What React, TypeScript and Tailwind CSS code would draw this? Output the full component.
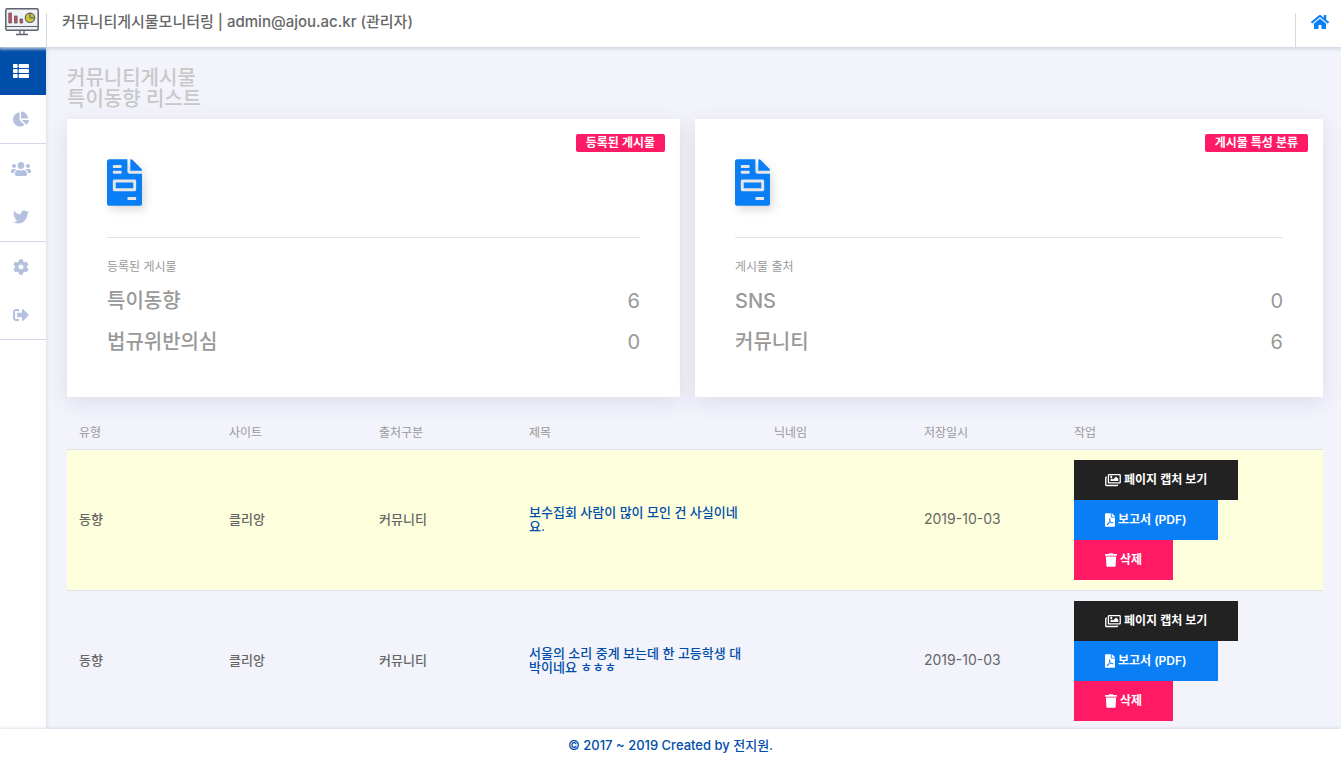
import type { ReactNode } from "react";
import {
  FaThList,
  FaChartPie,
  FaUsers,
  FaTwitter,
  FaCog,
  FaHome,
  FaFilePdf,
  FaRegImages,
  FaSignOutAlt,
  FaTrash,
} from "react-icons/fa";

const menu: { label: string; icon: ReactNode; line?: boolean; active?: boolean }[] = [
  { label: "리스트", icon: <FaThList className="h-4 w-4" />, active: true },
  { label: "통계", icon: <FaChartPie className="h-4 w-4" />, line: true },
  { label: "사용자", icon: <FaUsers className="h-4 w-5" /> },
  { label: "트위터", icon: <FaTwitter className="h-4 w-4" />, line: true },
  { label: "설정", icon: <FaCog className="h-4 w-4" /> },
  { label: "로그아웃", icon: <FaSignOutAlt className="h-4 w-4" />, line: true },
];

const posts = [
  {
    type: "동향",
    site: "클리앙",
    source: "커뮤니티",
    title: "보수집회 사람이 많이 모인 건 사실이네요.",
    nick: "",
    date: "2019-10-03",
    highlight: true,
  },
  {
    type: "동향",
    site: "클리앙",
    source: "커뮤니티",
    title: "서울의 소리 중계 보는데 한 고등학생 대박이네요 ㅎㅎㅎ",
    nick: "",
    date: "2019-10-03",
    highlight: false,
  },
];

function Logo() {
  return (
    <svg viewBox="0 0 36 30" className="h-[30px] w-9" fill="none" aria-hidden="true">
      <rect x="1.8" y="1.8" width="32.4" height="21.4" rx="1.5" fill="#f0f1f4" stroke="#5d636e" strokeWidth="1.5" />
      <path d="M1.8 19.500h32.400" stroke="#5d636e" strokeWidth="1.1" />
      <path d="M16 23.500v3.500M20 23.500v3.500M12 27.500h12" stroke="#5d636e" strokeWidth="1.300" />
      <path d="M4.800 6h2.600v10H4.800zM10.500 9h2.600v7h-2.600zM16 12h2.600v4H16z" fill="#e0464f" stroke="#5d636e" strokeWidth="0.9" />
      <circle cx="26" cy="10.800" r="4.700" fill="#cfc92e" stroke="#5d636e" strokeWidth="1.200" />
      <path d="M26 6v4.800h4.700" stroke="#5d636e" strokeWidth="1.200" />
    </svg>
  );
}

function InvoiceIcon() {
  return (
    <svg viewBox="0 0 384 512" className="h-[47px] w-[35px] drop-shadow-[3px_4px_4px_rgba(0,0,0,0.14)]" aria-hidden="true">
      <path fill="#e6e6e6" d="M40 50h200v90h110v330H40z" />
      <path
        fill="#0a7ff5"
        d="M288 256H96v64h192v-64zm89-151L279.100 7c-4.500-4.500-10.600-7-17-7H256v128h128v-6.100c0-6.300-2.500-12.400-7-16.900zm-153 31V0H24C10.700 0 0 10.700 0 24v464c0 13.300 10.700 24 24 24h336c13.300 0 24-10.700 24-24V160H248c-13.200 0-24-10.800-24-24zM64 72c0-4.420 3.580-8 8-8h80c4.420 0 8 3.580 8 8v16c0 4.420-3.580 8-8 8H72c-4.420 0-8-3.580-8-8V72zm0 64c0-4.420 3.580-8 8-8h80c4.420 0 8 3.580 8 8v16c0 4.420-3.580 8-8 8H72c-4.420 0-8-3.580-8-8v-16zm256 304c0 4.420-3.580 8-8 8h-80c-4.420 0-8-3.580-8-8v-16c0-4.420 3.580-8 8-8h80c4.420 0 8 3.580 8 8v16zm0-200v96c0 8.840-7.160 16-16 16H80c-8.840 0-16-7.160-16-16v-96c0-8.840 7.160-16 16-16h224c8.840 0 16 7.160 16 16z"
      />
    </svg>
  );
}

function Card({ badge, caption, rows }: { badge: string; caption: string; rows: [string, number][] }) {
  return (
    <section className="relative bg-white px-10 pt-10 pb-[34px] text-[#999] shadow-[0_5px_20px_rgba(69,65,98,0.12)]">
      <span className="absolute top-[15px] right-[15px] rounded-[2px] bg-[#ff1a66] px-2.5 text-[12px] leading-[18px] font-semibold text-white">
        {badge}
      </span>
      <InvoiceIcon />
      <hr className="mt-[31px] border-[#e3e3e6]" />
      <h2 className="mt-5 text-[12px] leading-[18px]">{caption}</h2>
      <dl className="mt-[5px]">
        {rows.map(([name, count]) => (
          <div key={name} className="flex justify-between text-[20px] leading-[41px]">
            <dt className="font-medium">{name}</dt>
            <dd>{count}</dd>
          </div>
        ))}
      </dl>
    </section>
  );
}

const buttonBase = "flex h-10 items-center gap-[3px] px-[31px] text-[12px] font-semibold text-white";

export default function App() {
  return (
    <div className="flex h-screen flex-col bg-[#f2f3fb] font-['Inter','Noto_Sans_CJK_KR',sans-serif] text-[#666]">
      <header className="z-10 flex h-[47px] shrink-0 items-end bg-white shadow-[0_1px_3px_1px_#cfd6e3]">
        <a href="#home" aria-label="커뮤니티게시물모니터링" className="flex h-full w-[46px] items-center pb-1 pl-1">
          <Logo />
        </a>
        <div className="flex h-[34px] flex-1 border-l border-[#d1d9e8] pl-[15px] text-[15px] leading-[18px] font-medium">
          커뮤니티게시물모니터링 | admin@ajou.ac.kr (관리자)
        </div>
        <a href="#main" aria-label="홈" className="flex h-[34px] w-[46px] justify-center border-l border-[#d1d9e8] pl-[3px] text-[#0a7ff5]">
          <FaHome className="h-[18px] w-[18px]" />
        </a>
      </header>

      <div className="flex min-h-0 flex-1">
        <nav className="w-[46px] shrink-0 bg-white shadow-[0_0_4px_#cdd0dd]">
          {menu.map((item) => (
            <a
              key={item.label}
              href="#menu"
              aria-label={item.label}
              className={
                item.active
                  ? "flex h-12 items-center justify-center bg-[#004daa] pr-1 text-white"
                  : item.line
                    ? "flex h-[49px] items-center justify-center border-b border-[#d1d9e8] pr-1 text-[#b3c1de]"
                    : "flex h-[49px] items-center justify-center pr-1 text-[#b3c1de]"
              }
            >
              {item.icon}
            </a>
          ))}
        </nav>

        <main className="min-w-0 flex-1 overflow-y-auto pt-[21px] pr-[18px] pl-[21px] [scrollbar-width:none]">
          <h1 className="text-[20px] leading-[21px] font-medium text-[#c8c8c8]">
            커뮤니티게시물
            <br />
            특이동향 리스트
          </h1>

          <div className="mt-[9px] grid grid-cols-2">
            <div className="pr-[15px]">
              <Card badge="등록된 게시물" caption="등록된 게시물" rows={[["특이동향", 6], ["법규위반의심", 0]]} />
            </div>
            <Card badge="게시물 특성 분류" caption="게시물 출처" rows={[["SNS", 0], ["커뮤니티", 6]]} />
          </div>

          <table className="mt-[18px] w-full table-fixed text-left text-[13px] leading-[14px] font-medium">
            <thead>
              <tr className="h-[34px] border-b border-[#dfe1e8] text-[12px] text-[#999] [&>th]:px-3 [&>th]:pt-[2px] [&>th]:font-normal">
                <th className="w-[150px]">유형</th>
                <th className="w-[150px]">사이트</th>
                <th className="w-[150px]">출처구분</th>
                <th className="w-[245px]">제목</th>
                <th className="w-[150px]">닉네임</th>
                <th className="w-[150px]">저장일시</th>
                <th>작업</th>
              </tr>
            </thead>
            <tbody>
              {posts.map((post) => (
                <tr
                  key={post.title}
                  className={
                    post.highlight
                      ? "border-b border-[#dfe1e8] bg-[#fdffdc] [&>td]:px-3 [&>td]:pt-[9px] [&>td]:pb-[11px]"
                      : "border-b border-[#dfe1e8] [&>td]:px-3 [&>td]:pt-[9px] [&>td]:pb-[11px]"
                  }
                >
                  <td>{post.type}</td>
                  <td>{post.site}</td>
                  <td>{post.source}</td>
                  <td>
                    <a href="#post" className="text-[#004daa]">
                      {post.title}
                    </a>
                  </td>
                  <td>{post.nick}</td>
                  <td className="text-[14px] font-normal">{post.date}</td>
                  <td className="pt-[10px]! pb-[10px]!">
                    <div className="flex flex-col items-start">
                      <button type="button" className={`${buttonBase} bg-[#222]`}>
                        <FaRegImages className="h-3.5 w-4" />
                        페이지 캡처 보기
                      </button>
                      <button type="button" className={`${buttonBase} bg-[#0a7ff5]`}>
                        <FaFilePdf className="h-3.5 w-2.5" />
                        보고서 (PDF)
                      </button>
                      <button type="button" className={`${buttonBase} bg-[#ff1a66]`}>
                        <FaTrash className="h-3.5 w-3" />
                        삭제
                      </button>
                    </div>
                  </td>
                </tr>
              ))}
            </tbody>
          </table>
        </main>
      </div>

      <footer className="z-10 flex h-8 shrink-0 items-center justify-center bg-white pt-[2px] text-[13px] font-medium text-[#004daa] shadow-[0_0_4px_#c9cfdd]">
        © 2017 ~ 2019 Created by 전지원.
      </footer>
    </div>
  );
}
